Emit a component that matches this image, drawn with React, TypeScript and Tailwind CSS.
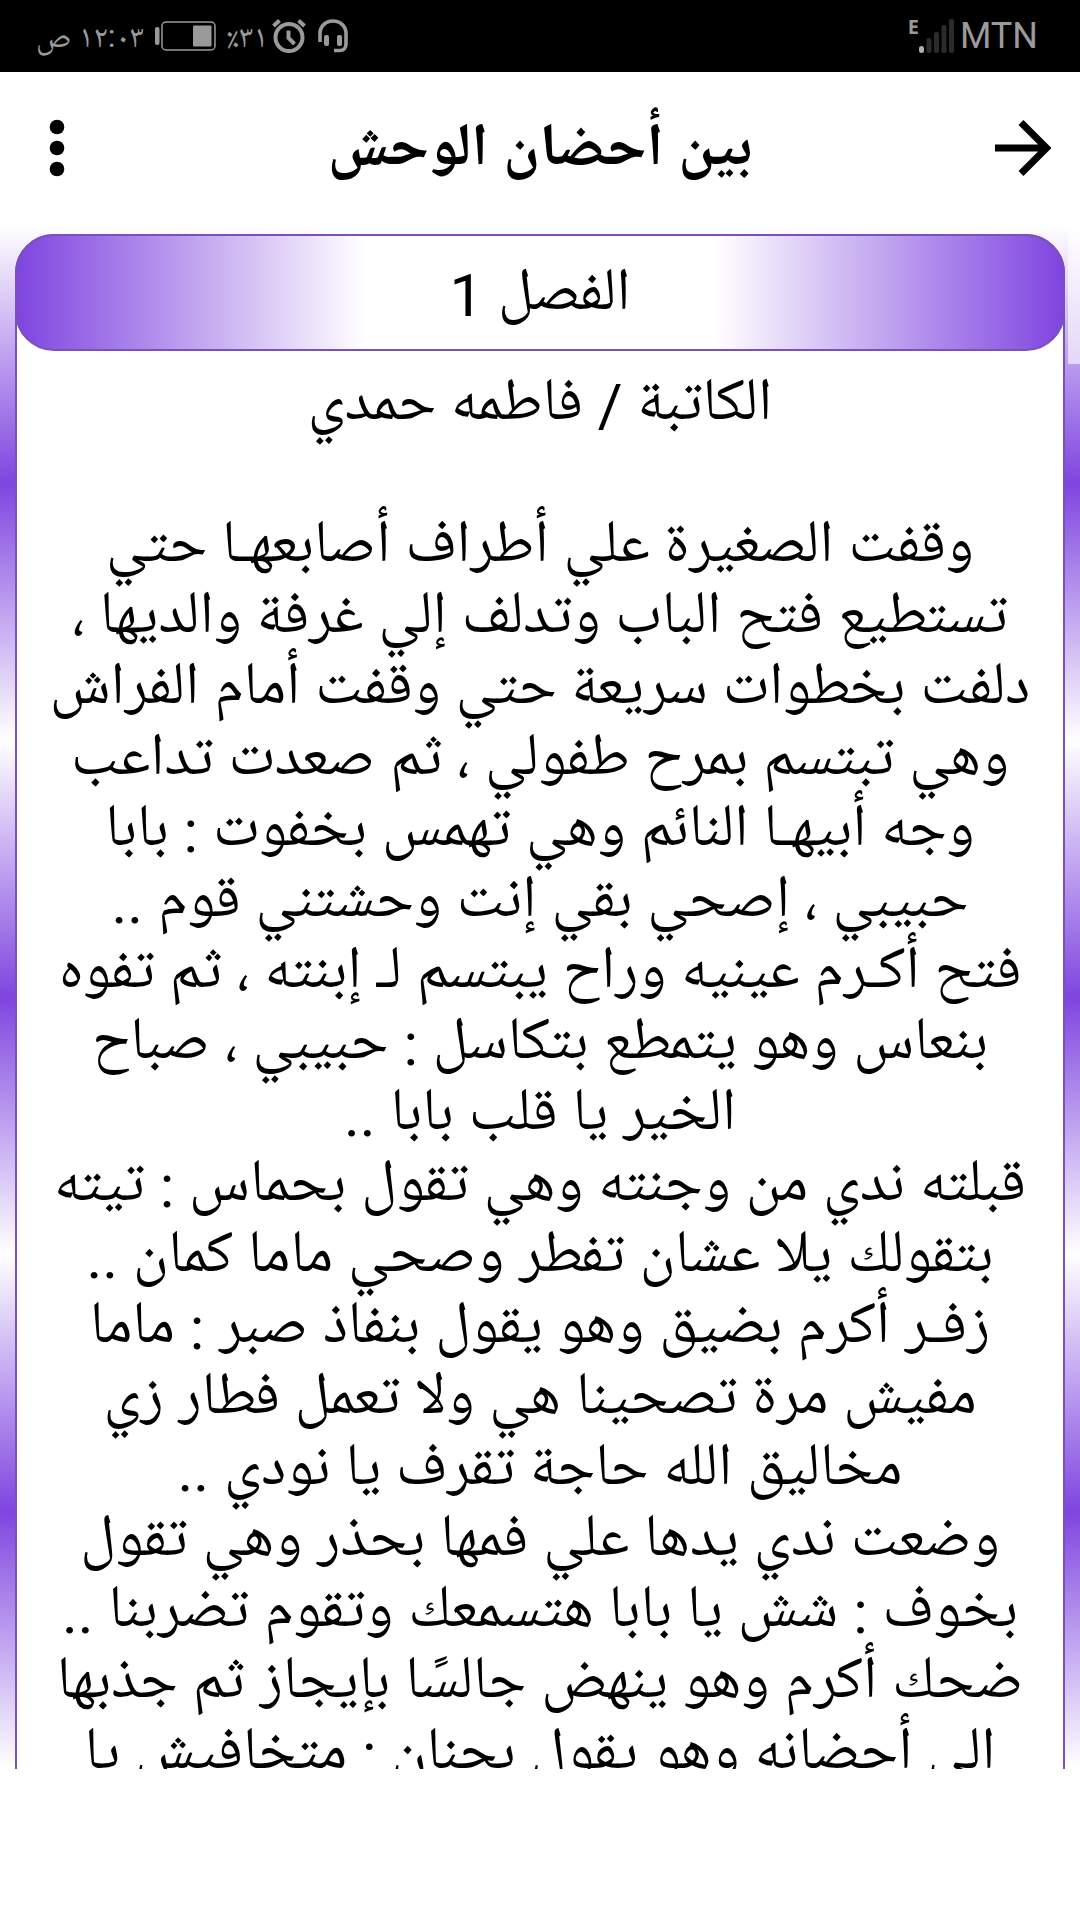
const chapter = {
  story: 'بين أحضان الوحش',
  title: 'الفصل 1',
  author: 'الكاتبة / فاطمه حمدي',
}

const lines = [
  'وقفت الصغيرة علي أطراف أصابعهـا حتي',
  'تستطيع فتح الباب وتدلف إلي غرفة والديها ،',
  'دلفت بخطوات سريعة حتي وقفت أمام الفراش',
  'وهي تبتسم بمرح طفولي ، ثم صعدت تداعب',
  'وجه أبيهـا النائم وهي تهمس بخفوت : بابا',
  'حبيبي ، إصحي بقي إنت وحشتني قوم ..',
  'فتح أكـرم عينيه وراح يبتسم لـ إبنته ، ثم تفوه',
  'بنعاس وهو يتمطع بتكاسل : حبيبي ، صباح',
  'الخير يا قلب بابا ..',
  'قبلته ندي من وجنته وهي تقول بحماس : تيته',
  'بتقولك يلا عشان تفطر وصحي ماما كمان ..',
  'زفـر أكرم بضيق وهو يقول بنفاذ صبر : ماما',
  'مفيش مرة تصحينا هي ولا تعمل فطار زي',
  'مخاليق الله حاجة تقرف يا نودي ..',
  'وضعت ندي يدها علي فمها بحذر وهي تقول',
  'بخوف : شش يا بابا هتسمعك وتقوم تضربنا ..',
  'ضحك أكرم وهو ينهض جالسًا بإيجاز ثم جذبها',
  'إلي أحضانه وهو يقول بحنان : متخافيش يا',
]

// Latin digits and punctuation sit lower than the Arabic letters
function ArabicText({ text }: { text: string }) {
  return text.split(/([0-9/:.]+)/).map((part, i) =>
    i % 2 ? (
      <span key={i} className="align-[-7px] leading-[48px]">
        {part}
      </span>
    ) : (
      part
    )
  )
}

function StatusBar() {
  return (
    <div className="flex h-[72px] shrink-0 items-center justify-between bg-black pr-[42px] pl-9 text-[#9a9a9a]">
      <div className="flex items-center gap-1.5">
        <span className="text-[36px]">MTN</span>
        <div className="flex items-start">
          <svg width="35" height="34" viewBox="0 0 35 34" aria-hidden="true">
            <rect x="0" y="27" width="5" height="7" rx="2.5" fill="#b0b0b0" />
            <g fill="#2b2b2b">
              <rect x="7.5" y="19" width="5" height="15" rx="2" />
              <rect x="15" y="13" width="5" height="21" rx="2" />
              <rect x="22.5" y="6" width="5" height="28" rx="2" />
              <rect x="30" y="0" width="5" height="34" rx="2" />
            </g>
          </svg>
          <span className="font-['Noto_Sans',sans-serif] text-[20px] leading-4 font-bold">E</span>
        </div>
      </div>

      <div className="flex items-center text-[32px] leading-[64px]">
        <svg width="30" height="34" viewBox="0 0 30 34" fill="none" aria-hidden="true">
          <path
            d="M2 23V14.5C2 7.5 7.5 2 15 2s13 5.5 13 12.5V25c0 4-2.5 6.5-6 6.5h-6"
            stroke="#9a9a9a"
            strokeWidth="3.6"
          />
          <rect x="6" y="16" width="5" height="11" rx="2" fill="#9a9a9a" />
          <rect x="19" y="16" width="5" height="11" rx="2" fill="#9a9a9a" />
        </svg>
        <svg className="mr-3" width="34" height="34" viewBox="0 0 34 34" fill="none" stroke="#9a9a9a" aria-hidden="true">
          <circle cx="17" cy="18.5" r="13.5" strokeWidth="4" />
          <path d="M16.5 11.5v7.5l6 6" strokeWidth="4" />
          <path d="M1.5 7 7.5 1.5M32.5 7 26.5 1.5" strokeWidth="4" />
        </svg>
        <span className="mr-1">٣١٪</span>
        <svg className="mr-2.5" width="62" height="30" viewBox="0 0 62 30" aria-hidden="true">
          <rect x="8" y="1" width="53" height="28" rx="4" fill="none" stroke="#9a9a9a" strokeWidth="1.5" />
          <rect x="39" y="4.5" width="18.5" height="21" rx="1" fill="#9a9a9a" />
          <rect x="1" y="6" width="4.5" height="18" rx="2" fill="#9a9a9a" />
        </svg>
        <span className="mr-2.5">١٢:٠٣ ص</span>
      </div>
    </div>
  )
}

function AppBar() {
  return (
    <header className="flex h-[154px] shrink-0 items-center justify-between px-[29px] pb-0.5">
      <button type="button" aria-label="رجوع" className="flex h-16 w-14 items-center justify-center">
        <svg width="56" height="56" viewBox="0 0 56 56" fill="none" stroke="#000" strokeWidth="7">
          <path d="M0 28h51M26 2.5 51.5 28 26 53.5" />
        </svg>
      </button>
      <h1 className="pb-1.5 text-[60px] leading-[96px] font-bold">{chapter.story}</h1>
      <button type="button" aria-label="خيارات" className="flex h-16 w-14 items-center justify-center">
        <svg width="16" height="58" viewBox="0 0 16 58">
          <circle cx="8" cy="8" r="7.3" />
          <circle cx="8" cy="29" r="7.3" />
          <circle cx="8" cy="50" r="7.3" />
        </svg>
      </button>
    </header>
  )
}

export default function App() {
  return (
    <div
      dir="rtl"
      className="flex h-screen flex-col overflow-hidden bg-white font-[Roboto,'Noto_Naskh_Arabic',sans-serif] text-black"
    >
      <StatusBar />
      <AppBar />

      <main className="relative min-h-0 flex-1 overflow-hidden bg-[repeating-linear-gradient(180deg,#ffffff_0px,#7f45e0_257px,#ffffff_514px)] px-[15px] pt-2">
        <article className="rounded-t-[39px] border-2 border-b-0 border-[#7b50b8] bg-white text-center text-[60px] leading-[71px]">
          <h2 className="-mx-0.5 -mt-0.5 h-[117px] rounded-[39px] border-2 border-[#7b50b8] bg-[linear-gradient(90deg,#7f45e0_0%,#ffffff_33.33%,#ffffff_66.66%,#7f45e0_100%)] leading-[106px]">
            <ArabicText text={chapter.title} />
          </h2>
          <p className="mt-3 mb-[71px] whitespace-nowrap">
            <ArabicText text={chapter.author} />
          </p>
          {lines.map((line) => (
            <p key={line} className="whitespace-nowrap">
              <ArabicText text={line} />
            </p>
          ))}
        </article>

        {/* scroll thumb */}
        <div className="absolute top-0 right-0 h-[138px] w-3 bg-white/60" />
      </main>

      <footer className="h-[151px] shrink-0" />
    </div>
  )
}
